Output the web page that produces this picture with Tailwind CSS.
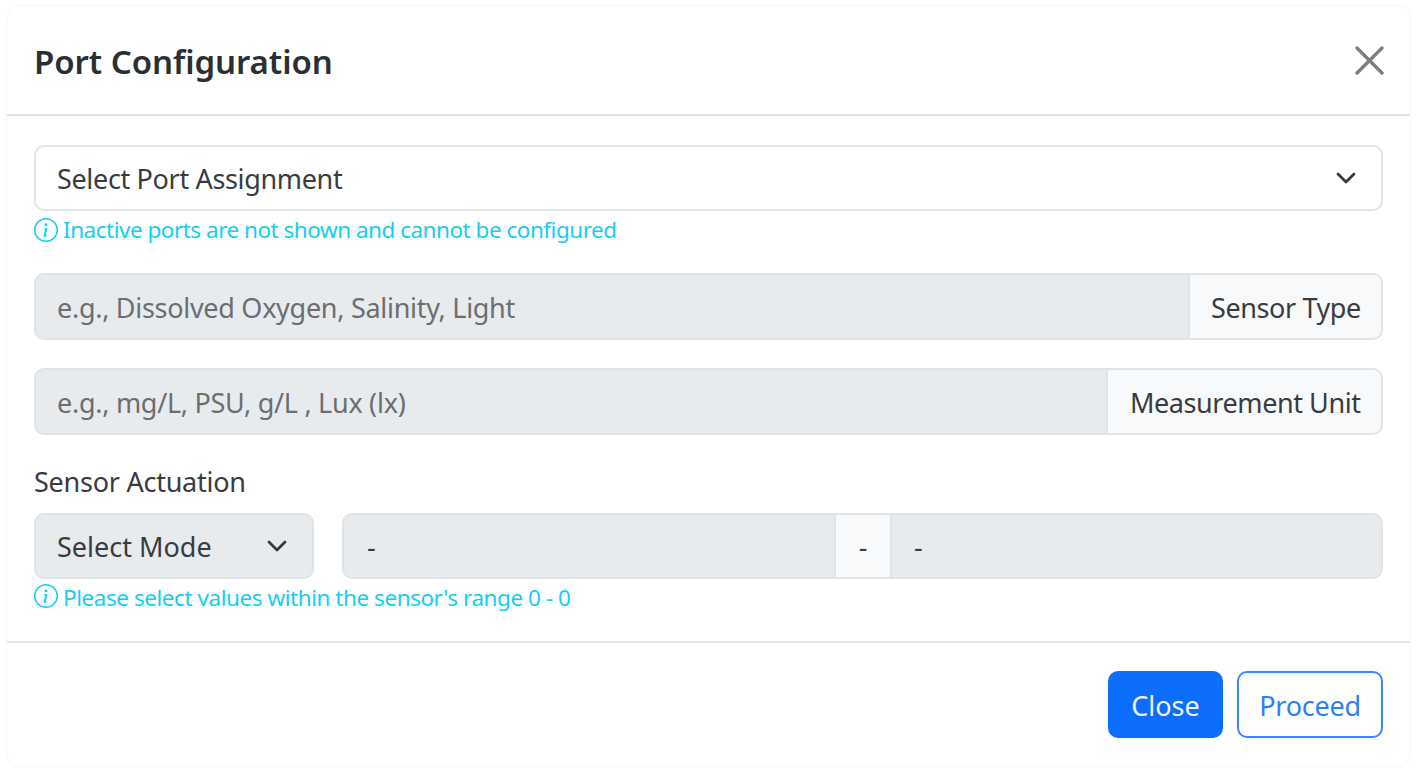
<!DOCTYPE html>
<html lang="en">
<head>
<meta charset="utf-8">
<title>Port Configuration</title>
<script src="https://cdn.jsdelivr.net/npm/@tailwindcss/browser@4"></script>
</head>
<body class="h-[772px] overflow-hidden bg-white px-[6px] pt-[5px] font-['Noto_Sans',sans-serif] text-[27px] text-[#383c40]">
<main class="flex h-[762px] flex-col rounded-[14px] border border-[#f7f7f7] bg-white">
  <header class="flex h-[110px] shrink-0 items-center justify-between border-b-2 border-[#dee2e6] pr-[26px] pl-[27px]">
    <h1 class="pt-[2px] text-[33px] leading-none font-semibold tracking-[-0.06px] text-[#2b2f33]">Port Configuration</h1>
    <button aria-label="Close" class="text-[#7f7f7f]"><svg class="size-[29px]" viewBox="0 0 29 29" fill="none" stroke="currentColor" stroke-width="3.4" stroke-linecap="round"><path d="M2 2 27 27M27 2 2 27"/></svg></button>
  </header>
  <section class="flex h-[527px] shrink-0 flex-col border-b-2 border-[#e3e6e9] px-[27px] pt-[29px]">
    <div class="flex h-[66px] shrink-0 items-center justify-between rounded-[10px] border-2 border-[#e1e5e8] pr-[25px] pl-[21px]">
      <span class="pt-[2px] tracking-[-0.34px]">Select Port Assignment</span>
      <svg class="h-[12px] w-[20px]" viewBox="0 0 20 12" fill="none" stroke="#343a40" stroke-width="2.8" stroke-linecap="round" stroke-linejoin="round"><path d="m2 2 8 8 8-8"/></svg>
    </div>
    <p class="mt-[3px] flex h-[32px] shrink-0 items-center gap-[5px] text-[22.5px] text-[#16cdf1]">
      <svg class="size-[24px]" viewBox="0 0 16 16" fill="currentColor"><path d="M8 15A7 7 0 1 1 8 1a7 7 0 0 1 0 14m0 1A8 8 0 1 0 8 0a8 8 0 0 0 0 16"/><path d="m8.93 6.588-2.29.287-.082.38.45.083c.294.07.352.176.288.469l-.738 3.468c-.194.897.105 1.319.808 1.319.545 0 1.178-.252 1.465-.598l.088-.416c-.2.176-.492.246-.686.246-.275 0-.375-.193-.304-.533zM9 4.5a1 1 0 1 1-2 0 1 1 0 0 1 2 0"/></svg>
      <span class="tracking-[-0.49px]">Inactive ports are not shown and cannot be configured</span>
    </p>
    <div class="mt-[27px] flex h-[67px] shrink-0 overflow-hidden rounded-[10px] border-2 border-[#e0e4e7] bg-[#e8ebee]">
      <div class="flex grow items-center pt-[3px] pl-[21px] tracking-[-0.29px] text-[#6a6e72]">e.g., Dissolved Oxygen, Salinity, Light</div>
      <div class="flex w-[193px] items-center border-l-2 border-[#e0e4e7] bg-[#f8f9fa] pt-[3px] pl-[21px] tracking-[-0.4px]">Sensor Type</div>
    </div>
    <div class="mt-[28px] flex h-[67px] shrink-0 overflow-hidden rounded-[10px] border-2 border-[#e0e4e7] bg-[#e8ebee]">
      <div class="flex grow items-center pt-[3px] pl-[21px] tracking-[-0.28px] text-[#6a6e72]">e.g., mg/L, PSU, g/L , Lux (lx)</div>
      <div class="flex w-[275px] items-center border-l-2 border-[#e0e4e7] bg-[#f8f9fa] pt-[3px] pl-[22px] tracking-[-0.43px]">Measurement Unit</div>
    </div>
    <div class="mt-[26px] flex h-[42px] shrink-0 items-center tracking-[-0.25px]">Sensor Actuation</div>
    <div class="mt-[10px] flex h-[66px] shrink-0 gap-[28px]">
      <div class="flex w-[280px] items-center justify-between rounded-[10px] border-2 border-[#e0e4e7] bg-[#e8ebee] pr-[25px] pl-[21px]">
        <span class="pt-[2px]">Select Mode</span>
        <svg class="h-[12px] w-[20px]" viewBox="0 0 20 12" fill="none" stroke="#343a40" stroke-width="2.8" stroke-linecap="round" stroke-linejoin="round"><path d="m2 2 8 8 8-8"/></svg>
      </div>
      <div class="flex grow overflow-hidden rounded-[10px] border-2 border-[#e0e4e7] bg-[#e8ebee]">
        <div class="flex w-[490px] items-center pt-[2px] pl-[23px]">-</div>
        <div class="flex w-[58px] items-center justify-center border-x-2 border-[#e0e4e7] bg-[#f8f9fa] pt-[2px]">-</div>
        <div class="flex grow items-center pt-[2px] pl-[22px]">-</div>
      </div>
    </div>
    <p class="mt-[1px] flex h-[32px] shrink-0 items-center gap-[5px] text-[22.5px] text-[#16cdf1]">
      <svg class="size-[24px]" viewBox="0 0 16 16" fill="currentColor"><path d="M8 15A7 7 0 1 1 8 1a7 7 0 0 1 0 14m0 1A8 8 0 1 0 8 0a8 8 0 0 0 0 16"/><path d="m8.93 6.588-2.29.287-.082.38.45.083c.294.07.352.176.288.469l-.738 3.468c-.194.897.105 1.319.808 1.319.545 0 1.178-.252 1.465-.598l.088-.416c-.2.176-.492.246-.686.246-.275 0-.375-.193-.304-.533zM9 4.5a1 1 0 1 1-2 0 1 1 0 0 1 2 0"/></svg>
      <span class="pt-[3px] tracking-[-0.45px]">Please select values within the sensor's range 0 - 0</span>
    </p>
  </section>
  <footer class="flex justify-end gap-[14px] pt-[28px] pr-[27px]">
    <button class="flex h-[67px] w-[115px] items-center justify-center rounded-[10px] bg-[#0d6efd] pt-[3px] text-[#edf4ff]">Close</button>
    <button class="flex h-[67px] w-[146px] items-center justify-center rounded-[10px] border-2 border-[#3a88fd] pt-[3px] tracking-[-0.25px] text-[#2b7ffd]">Proceed</button>
  </footer>
</main>
</body>
</html>
